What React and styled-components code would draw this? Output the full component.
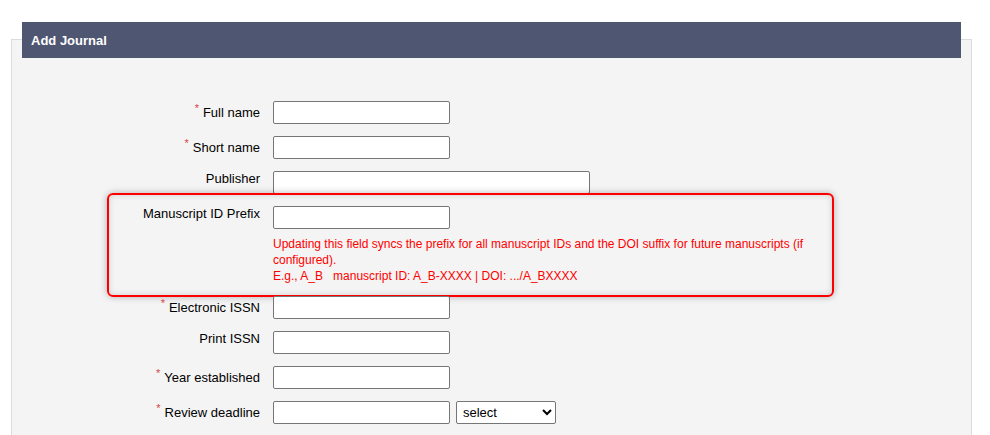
import React from "react";
import styled, { createGlobalStyle } from "styled-components";

const Global = createGlobalStyle`
  html, body { margin: 0; padding: 0; background: #ffffff; }
  body { font-family: "Liberation Sans", Arial, sans-serif; color: #000; }
  * { box-sizing: border-box; }
`;

const Panel = styled.section`
  margin: 39px 0 0 11px;
  width: 961px;
  min-height: 396px;
  background: #f4f4f4;
  border: 1px solid #dcdcdc;
  border-bottom: none;
`;

const Header = styled.h2`
  margin: -18px 10px 0;
  height: 36px;
  padding: 0 9px;
  display: flex;
  align-items: center;
  background: #4f5672;
  color: #ffffff;
  font-size: 13px;
  font-weight: bold;
`;

const Form = styled.div`
  display: flex;
  flex-direction: column;
  gap: 12px;
  padding-top: 43px;
`;

const Row = styled.div`
  display: flex;
  align-items: flex-start;
  gap: 13px;
  position: relative;
`;

const Label = styled.label`
  width: 248px;
  flex: none;
  text-align: right;
  font-size: 13px;
  line-height: 15px;
  padding-top: ${(p) => (p.$required ? "4px" : "0px")};
`;

const Star = styled.span`
  color: #d64545;
  font-size: 11px;
  position: relative;
  top: -5px;
  margin-right: 4px;
`;

const Field = styled.div`
  display: flex;
  flex-direction: column;
`;

const Inline = styled.div`
  display: flex;
  gap: 6px;
`;

const Input = styled.input`
  width: ${(p) => p.$w || 177}px;
  height: 23px;
  border: 1px solid #767676;
  border-radius: 2px;
  background: #ffffff;
  padding: 1px 2px;
  font: 13px "Liberation Sans", Arial, sans-serif;
  margin: 0;
`;

const Select = styled.select`
  width: 100px;
  height: 23px;
  border: 1px solid #767676;
  border-radius: 2px;
  background: #ffffff;
  font: 13px "Liberation Sans", Arial, sans-serif;
  color: #000;
  margin: 0;
  padding: 0 2px;
`;

const Hint = styled.p`
  margin: 7px 0 0;
  width: 545px;
  color: #ff0000;
  font-size: 12px;
  line-height: 16px;
`;

const Highlight = styled.div`
  position: absolute;
  left: 95px;
  top: -13px;
  width: 727px;
  height: 104px;
  border: 2px solid #ff0000;
  border-radius: 6px;
  box-shadow: 0 0 7px rgba(0, 0, 0, 0.28), inset 0 0 6px rgba(0, 0, 0, 0.15);
  pointer-events: none;
`;

function FieldRow({ label, required, children }) {
  return (
    <Row>
      <Label $required={required}>
        {required && <Star>*</Star>}
        {label}
      </Label>
      <Field>{children}</Field>
    </Row>
  );
}

export default function App() {
  return (
    <>
      <Global />
      <Panel>
        <Header>Add Journal</Header>
        <Form>
          <FieldRow label="Full name" required>
            <Input />
          </FieldRow>
          <FieldRow label="Short name" required>
            <Input />
          </FieldRow>
          <FieldRow label="Publisher">
            <Input $w={317} />
          </FieldRow>
          <Row>
            <Label>Manuscript ID Prefix</Label>
            <Field>
              <Input />
              <Hint>
                Updating this field syncs the prefix for all manuscript IDs and the DOI suffix for future manuscripts (if configured).
                <br />
                {"E.g., A_B\u00a0\u00a0\u00a0manuscript ID: A_B-XXXX | DOI: .../A_BXXXX"}
              </Hint>
            </Field>
            <Highlight />
          </Row>
          <FieldRow label="Electronic ISSN" required>
            <Input />
          </FieldRow>
          <FieldRow label="Print ISSN">
            <Input />
          </FieldRow>
          <FieldRow label="Year established" required>
            <Input />
          </FieldRow>
          <FieldRow label="Review deadline" required>
            <Inline>
              <Input />
              <Select defaultValue="select">
                <option value="select">select</option>
                <option value="days">days</option>
                <option value="weeks">weeks</option>
              </Select>
            </Inline>
          </FieldRow>
        </Form>
      </Panel>
    </>
  );
}
